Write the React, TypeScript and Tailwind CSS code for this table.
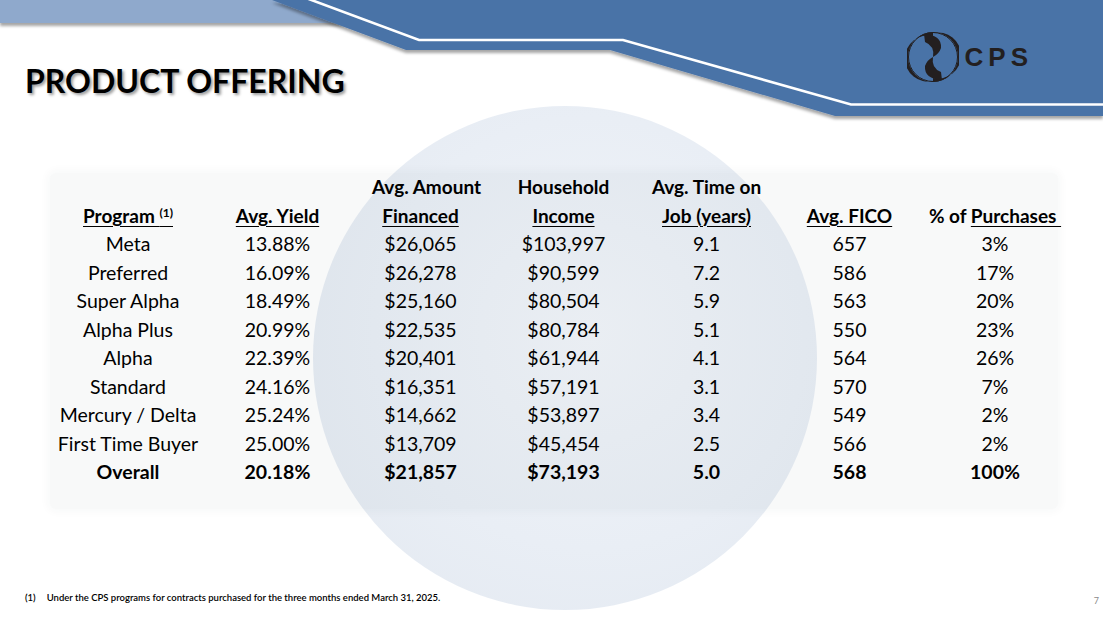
import React from "react";

const rows = [
  ["Meta", "13.88%", "$26,065", "$103,997", "9.1", "657", "3%"],
  ["Preferred", "16.09%", "$26,278", "$90,599", "7.2", "586", "17%"],
  ["Super Alpha", "18.49%", "$25,160", "$80,504", "5.9", "563", "20%"],
  ["Alpha Plus", "20.99%", "$22,535", "$80,784", "5.1", "550", "23%"],
  ["Alpha", "22.39%", "$20,401", "$61,944", "4.1", "564", "26%"],
  ["Standard", "24.16%", "$16,351", "$57,191", "3.1", "570", "7%"],
  ["Mercury / Delta", "25.24%", "$14,662", "$53,897", "3.4", "549", "2%"],
  ["First Time Buyer", "25.00%", "$13,709", "$45,454", "2.5", "566", "2%"],
];
const overall = ["Overall", "20.18%", "$21,857", "$73,193", "5.0", "568", "100%"];

function Banner() {
  return (
    <svg
      className="absolute left-0 top-0 -z-10"
      width="1103"
      height="130"
      viewBox="0 0 1103 130"
    >
      <defs>
        <filter id="sh" x="-5%" y="-20%" width="110%" height="160%">
          <feDropShadow dx="0" dy="3" stdDeviation="1.6" floodColor="#000" floodOpacity="0.35" />
        </filter>
      </defs>
      <rect x="0" y="0" width="360" height="23" fill="#8fa9cc" filter="url(#sh)" />
      <polygon
        points="272,0 1103,0 1103,116 835,116 610,50 406,50"
        fill="#4a73a7"
        filter="url(#sh)"
      />
      <polyline
        points="306,-2 419,40 623,40 851,104.5 1110,104.5"
        fill="none"
        stroke="#ffffff"
        strokeWidth="2.6"
      />
    </svg>
  );
}

// left half of the swirl; the right half is the same turned 180deg
const crescent = "M26 2 A25 25 0 0 0 26 52 L26 51 A23.06 23.06 0 1 1 26 6 Z";
const hook = "M17 4 Q35 5 34 18 Q32 24 26 27 Q28 16 18 12 Z";

function Logo() {
  return (
    <div className="flex items-center gap-[6px]">
      <svg width="52" height="54" viewBox="0 0 52 54">
        <circle cx="26" cy="27" r="24.5" fill="none" stroke="#231f20" strokeWidth="1" />
        <g fill="#231f20">
          <path d={crescent} />
          <path d={hook} />
          <g transform="rotate(180 26 27)">
            <path d={crescent} />
            <path d={hook} />
          </g>
        </g>
      </svg>
      <span className="font-['Liberation_Sans',Arial,sans-serif] text-[26px] font-bold leading-none tracking-[5px] text-[#231f20]">
        CPS
      </span>
    </div>
  );
}

function U({ children }: { children: React.ReactNode }) {
  return <span className="underline decoration-1 underline-offset-[3px]">{children}</span>;
}

export default function App() {
  return (
    <div className="relative isolate h-[623px] w-[1103px] overflow-hidden bg-white font-['Lato',sans-serif] text-black">
      <div className="absolute left-[313px] top-[106px] -z-10 h-[504px] w-[504px] rounded-full bg-[radial-gradient(circle_at_55%_45%,#f1f4f9_0%,#e9eef5_55%,#e2e8f0_100%)]" />
      <Banner />

      <div className="flex items-start justify-between">
        <h1 className="pl-[25px] pt-[64px] text-[32px] font-bold leading-[33px] [text-shadow:2px_2px_3px_rgba(0,0,0,0.4)]">
          PRODUCT OFFERING
        </h1>
        <div className="pr-[70px] pt-[30px]">
          <Logo />
        </div>
      </div>

      <div className="ml-[50px] mt-[76px] w-[1008px] rounded-md bg-[#20324d]/[0.03] pb-[22px] shadow-[0_0_8px_3px_rgba(32,50,77,0.03)]">
        <div className="grid grid-cols-[156px_143px_143px_143px_143px_143px_148px] text-center text-[19.5px] leading-[28.5px]">
          <div />
          <div />
          <div className="pl-[12px] text-[19px] font-bold">Avg. Amount</div>
          <div className="text-[19px] font-bold">Household</div>
          <div className="text-[19px] font-bold">Avg. Time on</div>
          <div />
          <div />

          <div className="text-[19px] font-bold">
            <U>
              Program <sup className="text-[12px]">(1)</sup>
            </U>
          </div>
          <div className="text-[19px] font-bold">
            <U>Avg. Yield</U>
          </div>
          <div className="text-[19px] font-bold">
            <U>Financed</U>
          </div>
          <div className="text-[19px] font-bold">
            <U>Income</U>
          </div>
          <div className="text-[19px] font-bold">
            <U>Job (years)</U>
          </div>
          <div className="text-[19px] font-bold">
            <U>Avg. FICO</U>
          </div>
          <div className="whitespace-pre text-[19px] font-bold">
            % of <U>Purchases </U>
          </div>

          {rows.map((r) =>
            r.map((c, i) => <div key={r[0] + i}>{c}</div>)
          )}
          {overall.map((c, i) => (
            <div key={"o" + i} className="font-bold">
              {c}
            </div>
          ))}
        </div>
      </div>

      <div className="mt-[83px] flex items-end justify-between pl-[25px] pr-[4px]">
        <p className="text-[9.5px] font-semibold leading-[12px]">
          <span className="mr-[11px]">(1)</span>
          Under the CPS programs for contracts purchased for the three months ended March 31, 2025.
        </p>
        <span className="mb-[-4px] text-[9px] text-[#8a8a8a]">7</span>
      </div>
    </div>
  );
}
